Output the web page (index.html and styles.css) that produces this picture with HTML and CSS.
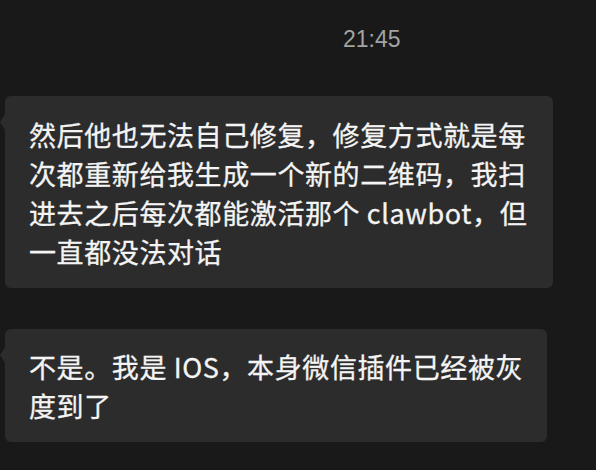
FILE: index.html
```html
<!DOCTYPE html>
<html lang="zh-CN">
<head>
<meta charset="utf-8">
<link rel="stylesheet" href="styles.css">
</head>
<body>
<div class="chat">
  <div class="time">21:45</div>
  <div class="msg msg-a">然后他也无法自己修复，修复方式就是每次都重新给我生成一个新的二维码，我扫进去之后每次都能激活那个 clawbot，但一直都没法对话</div>
  <div class="msg msg-b">不是。我是 IOS，本身微信插件已经被灰度到了</div>
</div>
</body>
</html>
```
FILE: styles.css
```css
html, body {
  margin: 0;
  padding: 0;
  background: #191919;
}
body {
  width: 596px;
  height: 470px;
  overflow: hidden;
  font-family: "Noto Sans CJK SC", "Noto Sans", sans-serif;
}
.chat {
  display: flex;
  flex-direction: column;
  align-items: flex-start;
  padding: 24px 0 0 5px;
}
.time {
  align-self: stretch;
  text-align: left;
  padding-left: 338px;
  font-family: "Liberation Sans", "Noto Sans", sans-serif;
  font-size: 23px;
  line-height: 30px;
  color: #a3a3a3;
  margin-bottom: 42px;
}
.msg {
  position: relative;
  box-sizing: border-box;
  background: #2c2c2c;
  color: #f4f4f4;
  border-radius: 6px;
  font-size: 27px;
  letter-spacing: 0.6px;
  line-height: 39px;
  padding: 19px 20px 17px 24px;
  -webkit-text-stroke: 0.3px #f4f4f4;
}
.msg::before {
  content: "";
  position: absolute;
  left: -5px;
  top: 18px;
  border-top: 8px solid transparent;
  border-bottom: 8px solid transparent;
  border-right: 5px solid #2c2c2c;
}
.msg-a {
  width: 548px;
  margin-bottom: 41px;
}
.msg-b {
  width: 542px;
  padding-top: 18px;
}
```
